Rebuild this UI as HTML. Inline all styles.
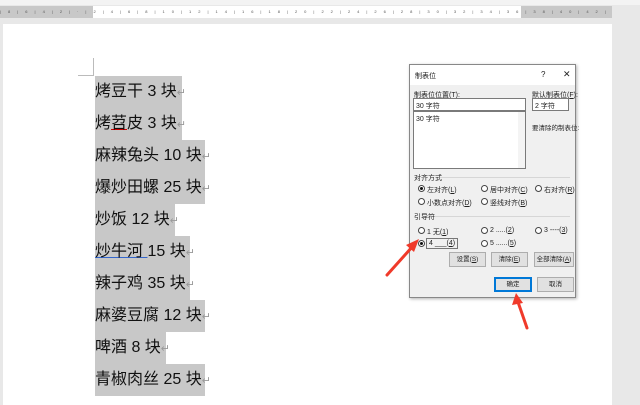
<!DOCTYPE html>
<html><head><meta charset="utf-8"><style>
*{margin:0;padding:0;box-sizing:border-box}
body{width:640px;height:405px;overflow:hidden;background:#e8e8e8;font-family:"Liberation Sans","Noto Sans CJK SC",sans-serif;position:relative}
.abs{position:absolute}
.ruler{left:0;top:6px;width:612px;height:12px;background:#c8c8c8}
.rw{left:93px;top:6px;width:428px;height:12px;background:#fff}
.page{left:3px;top:24px;width:609px;height:381px;background:#fff}
.ln{position:absolute;left:95px;height:32px;background:#c8c8c8;font-size:16px;line-height:32px;color:#111;white-space:nowrap}
.ln i{font-style:normal;color:#999;font-size:11px}
.dlg{left:409px;top:64px;width:167px;height:234px;background:#f0f0f0;border:1px solid #888;box-shadow:1px 1px 3px rgba(0,0,0,.3);font-size:7px;color:#222}
.dlg .t{position:absolute;white-space:nowrap}
.inp{position:absolute;background:#fff;border:1px solid #7a7a7a}
.btn{position:absolute;background:#e1e1e1;border:1px solid #adadad;text-align:center;line-height:14px;font-size:6.5px;white-space:nowrap}
.rad{position:absolute;width:7px;height:7px;border:1px solid #444;border-radius:50%;background:#fff}
.rad.on::after{content:"";position:absolute;left:1px;top:1px;width:3px;height:3px;border-radius:50%;background:#111}
.sep{position:absolute;height:1px;background:#d6d6d6}
</style></head><body>
<div class="abs" style="left:0;top:0;width:640px;height:5px;background:#f3f3f3"></div>
<div class="abs ruler"></div><div class="abs rw"></div>
<div class="abs" style="left:0;top:9px;width:612px;font-size:4px;color:#555;letter-spacing:7px;white-space:nowrap;overflow:hidden">|8|6|4|2|·|2|4|6|8|10|12|14|16|18|20|22|24|26|28|30|32|34|36|38|40|42|44|46|48</div>
<div class="abs page"></div>
<div class="abs" style="left:93px;top:58px;width:1px;height:17px;background:#bbb"></div>
<div class="abs" style="left:78px;top:75px;width:16px;height:1px;background:#bbb"></div>
<div class="ln" style="top:76px;width:87px">烤豆干 3 块<i>↵</i></div>
<div class="ln" style="top:108px;width:87px">烤<u style="text-decoration-color:#c00">苕</u>皮 3 块<i>↵</i></div>
<div class="ln" style="top:140px;width:110px">麻辣兔头 10 块<i>↵</i></div>
<div class="ln" style="top:172px;width:110px">爆炒田螺 25 块<i>↵</i></div>
<div class="ln" style="top:204px;width:80px">炒饭 12 块<i>↵</i></div>
<div class="ln" style="top:236px;width:95px"><u style="text-decoration-color:#36c">炒牛河 </u>15 块<i>↵</i></div>
<div class="ln" style="top:268px;width:95px">辣子鸡 35 块<i>↵</i></div>
<div class="ln" style="top:300px;width:110px">麻婆豆腐 12 块<i>↵</i></div>
<div class="ln" style="top:332px;width:71px">啤酒 8 块<i>↵</i></div>
<div class="ln" style="top:364px;width:110px">青椒肉丝 25 块<i>↵</i></div>

<div class="abs dlg">
<div class="abs" style="left:0;top:0;width:165px;height:20px;background:#fff"></div>
<div class="t" style="left:5px;top:6px">制表位</div>
<div class="t" style="left:131px;top:5px;font-size:8px">?</div>
<div class="t" style="left:153px;top:4px;font-size:9px">✕</div>
<div class="t" style="left:4px;top:25px">制表位位置(<u>T</u>):</div>
<div class="t" style="left:122px;top:25px">默认制表位(<u>F</u>):</div>
<div class="inp" style="left:3px;top:33px;width:113px;height:13px"><span class="t" style="left:2px;top:2px">30 字符</span></div>
<div class="inp" style="left:3px;top:46px;width:113px;height:58px"><span class="t" style="left:2px;top:2px">30 字符</span><div class="abs" style="right:0;top:0;width:7px;height:56px;background:#f4f4f4"></div></div>
<div class="inp" style="left:122px;top:33px;width:37px;height:13px"><span class="t" style="left:2px;top:2px">2 字符</span></div>
<div class="t" style="left:122px;top:57px;font-size:6.5px">要清除的制表位:</div>
<div class="t" style="left:4px;top:108px">对齐方式</div><div class="sep" style="left:30px;top:112px;width:130px"></div>
<div class="rad on" style="left:8px;top:120px"></div><div class="t" style="left:17px;top:120px">左对齐(<u>L</u>)</div>
<div class="rad" style="left:71px;top:120px"></div><div class="t" style="left:80px;top:120px">居中对齐(<u>C</u>)</div>
<div class="rad" style="left:125px;top:120px"></div><div class="t" style="left:134px;top:120px">右对齐(<u>R</u>)</div>
<div class="rad" style="left:8px;top:133px"></div><div class="t" style="left:17px;top:133px">小数点对齐(<u>D</u>)</div>
<div class="rad" style="left:71px;top:133px"></div><div class="t" style="left:80px;top:133px">竖线对齐(<u>B</u>)</div>
<div class="t" style="left:4px;top:147px">引导符</div><div class="sep" style="left:25px;top:151px;width:135px"></div>
<div class="rad" style="left:8px;top:162px"></div><div class="t" style="left:17px;top:162px">1 无(<u>1</u>)</div>
<div class="rad" style="left:71px;top:162px"></div><div class="t" style="left:80px;top:162px">2 .....(<u>2</u>)</div>
<div class="rad" style="left:125px;top:162px"></div><div class="t" style="left:134px;top:162px">3 ----(<u>3</u>)</div>
<div class="rad on" style="left:8px;top:175px"></div><div class="t" style="left:16px;top:173px;border:1px solid #777;padding:1px 2px">4 ___(<u>4</u>)</div>
<div class="rad" style="left:71px;top:175px"></div><div class="t" style="left:80px;top:175px">5 ......(<u>5</u>)</div>
<div class="btn" style="left:39px;top:187px;width:37px;height:15px">设置(<u>S</u>)</div>
<div class="btn" style="left:81px;top:187px;width:37px;height:15px">清除(<u>E</u>)</div>
<div class="btn" style="left:124px;top:187px;width:40px;height:15px">全部清除(<u>A</u>)</div>
<div class="btn" style="left:84px;top:212px;width:38px;height:15px;border:1px solid #0078d7;box-shadow:inset 0 0 0 1px #0078d7">确定</div>
<div class="btn" style="left:127px;top:212px;width:37px;height:15px">取消</div>
</div>
<svg class="abs" style="left:0;top:0" width="640" height="405">
<path d="M387 275 L413 246" stroke="#f03a2a" stroke-width="3" stroke-linecap="round"/>
<path d="M419 239 L406 245 L414 252 Z" fill="#f03a2a"/>
<path d="M527 328 L518 302" stroke="#f03a2a" stroke-width="3" stroke-linecap="round"/>
<path d="M516 293 L512 305 L523 303 Z" fill="#f03a2a"/>
</svg>
</body></html>
